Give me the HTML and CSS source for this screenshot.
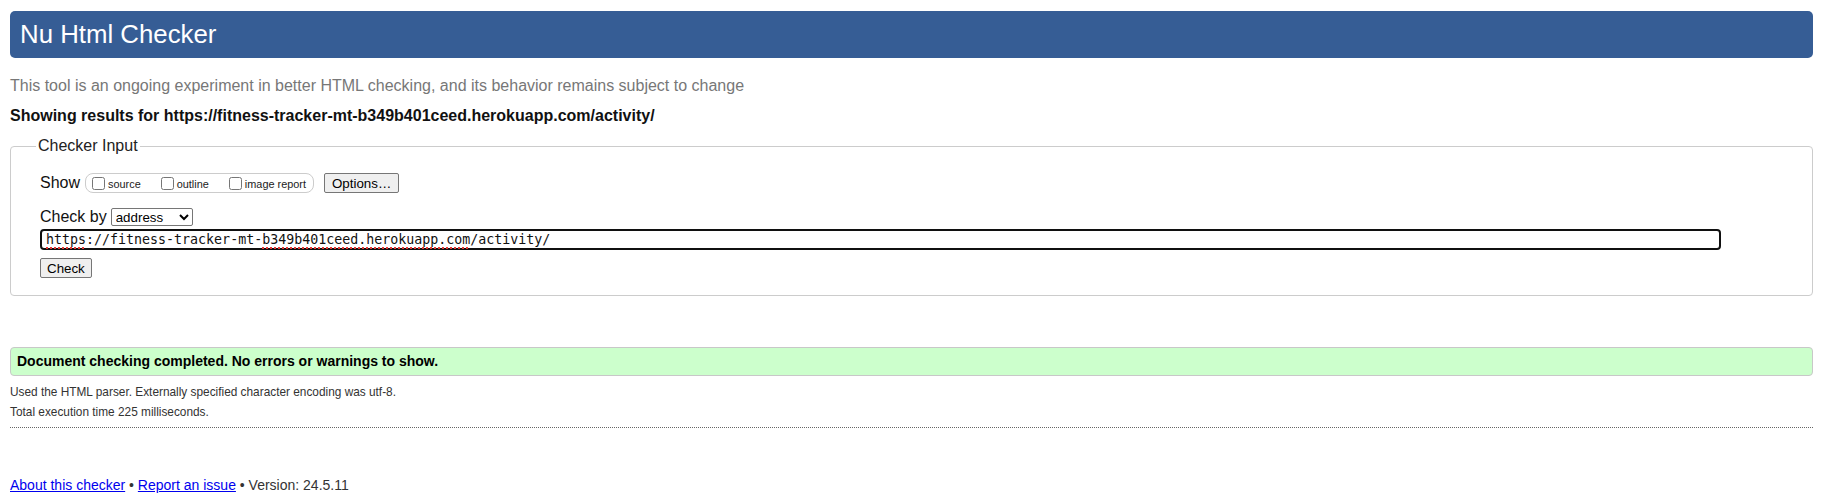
FILE: index.html
```html
<!DOCTYPE html>
<html lang="en">
<head>
<meta charset="utf-8">
<title>Nu Html Checker</title>
<link rel="stylesheet" href="styles.css">
</head>
<body>
<h1 class="title">Nu Html Checker</h1>
<p class="intro">This tool is an ongoing experiment in better HTML checking, and its behavior remains subject to change</p>
<p class="showing">Showing results for https://fitness-tracker-mt-b349b401ceed.herokuapp.com/activity/</p>
<form class="checker">
  <fieldset class="input-set">
    <legend class="legend">Checker Input</legend>
    <div class="row show-row">
      <span class="lbl">Show</span>
      <span class="opts">
        <label class="opt"><input type="checkbox" class="cb"><span>source</span></label>
        <label class="opt"><input type="checkbox" class="cb"><span>outline</span></label>
        <label class="opt"><input type="checkbox" class="cb"><span>image report</span></label>
      </span>
      <button type="button" class="btn options">Options…</button>
    </div>
    <div class="row by-row">
      <span class="lbl">Check by</span>
      <select class="sel"><option>address</option></select>
    </div>
    <div class="url"><span class="misspelt">https</span>://fitness-tracker-mt-<span class="misspelt">b349b401ceed.herokuapp.com</span>/activity/</div>
    <button type="button" class="btn check">Check</button>
  </fieldset>
</form>
<div class="success">Document checking completed. No errors or warnings to show.</div>
<p class="meta first">Used the HTML parser. Externally specified character encoding was utf-8.</p>
<p class="meta">Total execution time 225 milliseconds.</p>
<hr class="sep">
<p class="footer"><a href="#" class="link">About this checker</a> • <a href="#" class="link">Report an issue</a> • Version: 24.5.11</p>
</body>
</html>
```

FILE: styles.css
```css
html { background: #fff; }
body {
  margin: 0;
  padding: 11px 19px 0 10px;
  font-family: "Liberation Sans", Arial, sans-serif;
  color: #000;
}
.title {
  margin: 0;
  height: 47px;
  line-height: 47px;
  padding: 0 10px;
  font-size: 25.8px;
  font-weight: normal;
  color: #fff;
  background: #365d95;
  border-radius: 5px;
}
.intro {
  margin: 19px 0 0;
  font-size: 16px;
  line-height: 18px;
  color: #777;
}
.showing {
  margin: 12px 0 0;
  font-size: 16px;
  line-height: 18px;
  font-weight: bold;
  color: #111;
}
.checker { margin: 12px 0 0; }
.input-set {
  margin: 0;
  padding: 0 29px 17px;
  border: 1px solid #ccc;
  border-radius: 4px;
  min-width: 0;
}
.legend {
  padding: 0 2px;
  margin-left: -4px;
  font-size: 16px;
  line-height: 18px;
  color: #222;
}
.row {
  display: flex;
  align-items: center;
  height: 20px;
}
.show-row { margin-top: 18px; }
.by-row { margin-top: 14px; gap: 4px; }
.lbl { font-size: 16px; line-height: 18px; color: #111; }
.opts {
  display: flex;
  align-items: center;
  box-sizing: border-box;
  height: 20px;
  margin-left: 5px;
  padding: 0 7px 0 6px;
  border: 1px solid #ccc;
  border-radius: 8px;
}
.opt {
  display: flex;
  align-items: center;
  gap: 3px;
  margin-right: 20px;
  font-size: 10.9px;
  color: #222;
}
.opt:last-child { margin-right: 0; }
.opt span { position: relative; top: 1px; }
.cb { margin: 0; width: 13px; height: 13px; }
.btn {
  box-sizing: border-box;
  height: 20px;
  padding: 1px 6px;
  font-family: "Liberation Sans", Arial, sans-serif;
  font-size: 13.33px;
  color: #000;
  background: #efefef;
  border: 1px solid #767676;
  border-radius: 2px;
}
.options { margin-left: 10px; padding: 1px 7px; }
.sel {
  box-sizing: border-box;
  width: 82px;
  height: 18px;
  font-family: "Liberation Sans", Arial, sans-serif;
  font-size: 13.33px;
  color: #000;
  background: #fff;
  border: 1px solid #767676;
  border-radius: 2px;
}
.url {
  box-sizing: border-box;
  width: 1681px;
  height: 21px;
  margin-top: 2px;
  padding: 0 4px;
  border: 2px solid #101010;
  border-radius: 4px;
  font-family: "DejaVu Sans Mono", monospace;
  font-size: 13.3px;
  line-height: 17px;
  color: #111;
  white-space: nowrap;
}
.misspelt {
  text-decoration: underline dotted #e53935;
  text-decoration-thickness: 2px;
  text-underline-offset: 3px;
}
.check { display: block; margin-top: 8px; }
.success {
  margin-top: 51px;
  height: 29px;
  box-sizing: border-box;
  padding: 0 6px;
  line-height: 27px;
  font-size: 14px;
  font-weight: bold;
  color: #000;
  background: #ccffcc;
  border: 1px solid #c8c8c8;
  border-radius: 4px;
}
.meta {
  margin: 6px 0 0;
  font-size: 11.85px;
  line-height: 14px;
  color: #333;
}
.meta.first { margin-top: 9px; }
.sep {
  margin: 8px 0 0;
  height: 0;
  border: 0;
  border-top: 1px dotted #666;
}
.footer {
  margin: 49px 0 0;
  font-size: 14px;
  line-height: 16px;
  color: #333;
}
.link { color: #00e; }
```
